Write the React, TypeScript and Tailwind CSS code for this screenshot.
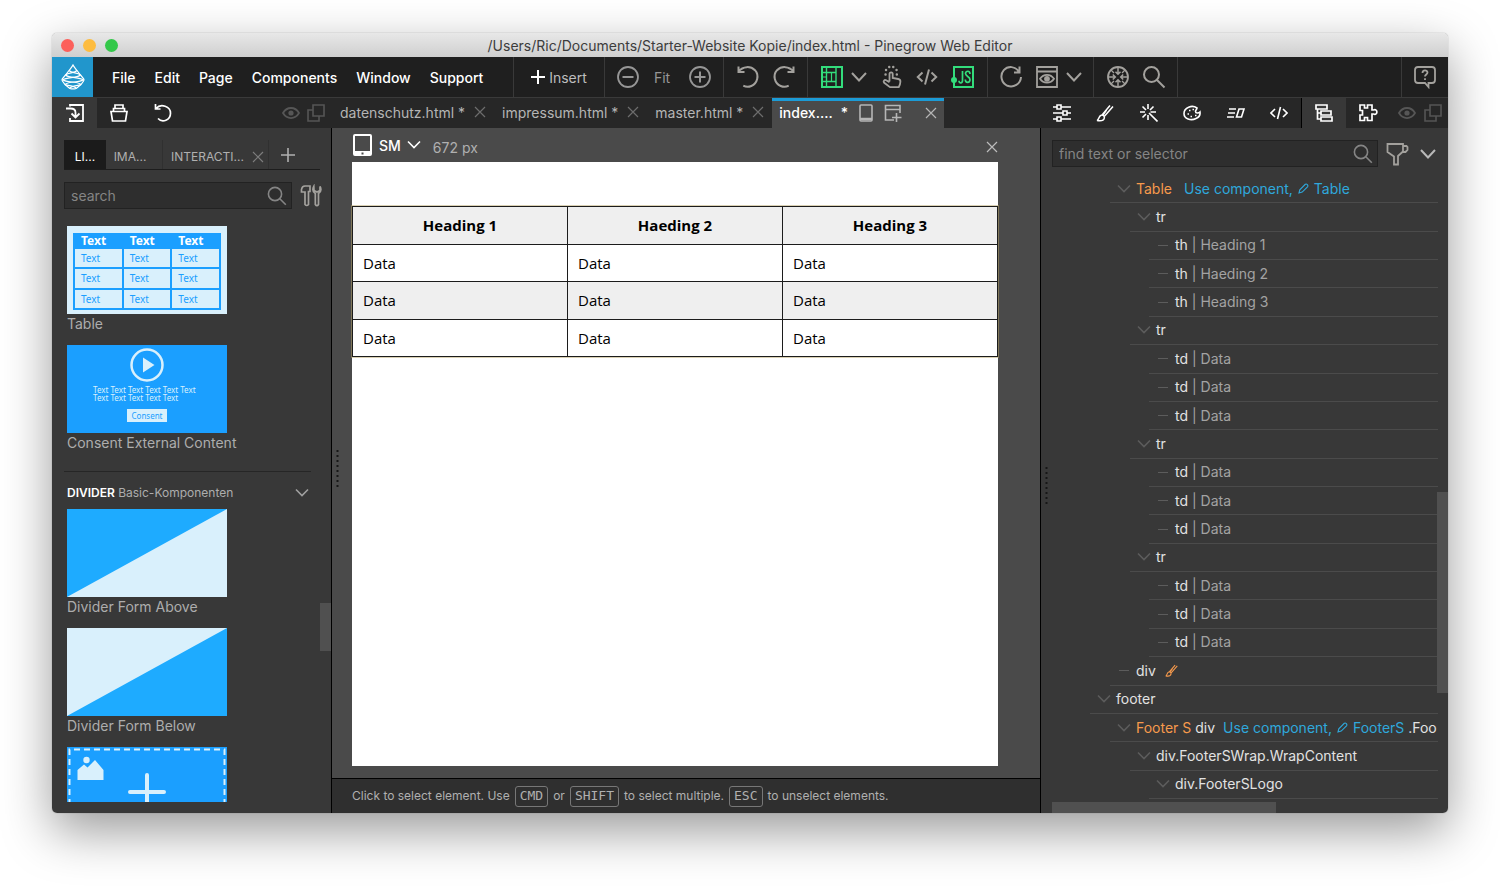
import React from "react";

type IconProps = { w?: number; h?: number; sw?: number; className?: string; children: React.ReactNode };

function Icon({ w = 24, h = 24, sw = 2, className = "", children }: IconProps) {
  return (
    <svg
      width={w}
      height={h}
      viewBox={`0 0 ${w} ${h}`}
      fill="none"
      stroke="currentColor"
      strokeWidth={sw}
      className={`shrink-0 ${className}`}
      aria-hidden="true"
    >
      {children}
    </svg>
  );
}

const Chevron = ({ className = "" }: { className?: string }) => (
  <Icon w={18} h={12} className={className}><path d="M2 2l7 7.5L16 2" /></Icon>
);
const SmallChevron = ({ className = "" }: { className?: string }) => (
  <Icon w={14} h={10} sw={1.6} className={className}><path d="M1 1.500l6 6 6-6" /></Icon>
);
const Close = ({ className = "" }: { className?: string }) => (
  <Icon w={12} h={12} sw={1.2} className={className}><path d="M1 1l10 10M11 1L1 11" /></Icon>
);
const Search = ({ className = "" }: { className?: string }) => (
  <Icon className={className}><circle cx="9.5" cy="9.5" r="7.5" /><path d="M15 15l7.5 7.5" /></Icon>
);
const SmallSearch = () => (
  <Icon w={20} h={20} sw={1.6} className="text-[#858585]"><circle cx="8" cy="8" r="6.600" /><path d="M12.800 12.800l6 6" /></Icon>
);
const Eye = () => (
  <Icon w={18} h={14} sw={1.8}><path d="M1 7c4-6.700 12-6.700 16 0-4 6.700-12 6.700-16 0z" /><circle cx="9" cy="7" r="2.600" fill="currentColor" stroke="none" /></Icon>
);
const Copy = () => (
  <Icon w={18} h={18} sw={1.6}><path d="M6 1h11v11H6z" /><path d="M6 6H1v11h11v-5" /></Icon>
);
const Undo = () => (
  <Icon><path d="M2.500 1.500v5.500h6M2.500 6.500C7 1 14.500 .8 19 5.200c4.500 5 2.500 13.300-3.700 15.800-2.500 1-5.500 1-8-.4" /></Icon>
);
const Redo = () => (
  <Icon><path d="M21.500 1.500v5.500h-6M21.500 6.500C17 1 9.500 .8 5 5.200c-4.500 5-2.500 13.300 3.700 15.800 2.500 1 5.500 1 8-.4" /></Icon>
);
const Code = () => (
  <Icon w={22} h={16}><path d="M6.500 3.500L1.800 8l4.700 4.500M15.500 3.500L20.200 8l-4.700 4.500M13 .5L9 15.500" /></Icon>
);
const Brush = ({ size = 18 }: { size?: number }) => (
  <svg width={size} height={size} viewBox="0 0 18 18" fill="none" stroke="currentColor" strokeWidth="1.500" className="shrink-0" aria-hidden="true">
    <path d="M1 16.500c2.200-.6 1.500-4.500 4.200-5.300 1.800-.5 3.500.9 3.100 2.900-.6 2.700-4 3-7.300 2.400zM6 11L14 1.500M8.200 12.500L17 2.500M10.500 6l-3.500 5" />
  </svg>
);
const Pencil = () => (
  <Icon w={11} h={11} sw={1.1}><path d="M1 10l.8-3.200L7.300 1.300q1.100-.7 2 .3t.4 2L4.200 9.100z" /></Icon>
);
const Tablet = () => (
  <Icon w={14} h={18} sw={1.6}><rect x="1" y="1" width="12" height="16" rx="1" /><path d="M1 15h12" strokeWidth="2.400" /></Icon>
);

function PineLogo() {
  return (
    <Icon w={24} h={26} sw={1.2} className="text-white">
      <path d="M12 1C11 3 9.500 4.500 8 6.500L4.500 11 1.500 14.500q-1 1.500.3 3L4 20.500l4.500 3.800q1 .6 2 .6h3q1 0 2-.6l4.500-3.800 2.200-3q1.300-1.500.3-3L19.500 11 16 6.500C14.500 4.500 13 3 12 1z" />
      <path d="M8 6.500c2.500 3 8.500 1.800 11.500 4.500M4.500 11c4 3.800 13.500 1.500 18 5M1.500 15.500c4.500 4 14 1 18.500 5M4 20.500c3.500 1.800 8.500.5 11.500 4" />
      <path d="M16 6.500c-2.500 3-8.500 1.800-11.500 4.500M19.500 11c-4 3.800-13.500 1.500-18 5M22.500 15.500c-4.500 4-14 1-18.500 5M20 20.500c-3.500 1.800-8.500.5-11.500 4" />
    </Icon>
  );
}

function IconButton({ label, className = "", children }: { label: string; className?: string; children: React.ReactNode }) {
  return (
    <button type="button" aria-label={label} className={`flex items-center justify-center ${className}`}>
      {children}
    </button>
  );
}

function TitleBar() {
  return (
    <header className="flex h-6 shrink-0 items-center rounded-t-[5px] bg-linear-to-b from-[#e8e8e8] to-[#cfcfcf] px-[9px] pt-px">
      <div className="flex flex-1 gap-[9px]">
        <span className="size-[13px] rounded-full bg-[#fc605b]" />
        <span className="size-[13px] rounded-full bg-[#fdbc40]" />
        <span className="size-[13px] rounded-full bg-[#34c84a]" />
      </div>
      <h1 className="text-[14px] text-[#3c3c3c]">/Users/Ric/Documents/Starter-Website Kopie/index.html - Pinegrow Web Editor</h1>
      <div className="flex-1" />
    </header>
  );
}

function MenuBar() {
  const group = "flex items-center justify-center border-l border-[#393939]";
  return (
    <div className="flex h-[41px] shrink-0 border-b border-[#3a3a3a] bg-[#1f1f1f] text-[#a3a19d]">
      <a href="#home" aria-label="Pinegrow" className="flex w-[41px] items-center justify-center bg-[#2196cc]">
        <PineLogo />
      </a>
      <nav className="flex w-[420px] items-center gap-[19px] pl-[19px] text-[14px] font-medium text-white">
        {["File", "Edit", "Page", "Components", "Window", "Support"].map((m) => (
          <button type="button" key={m}>{m}</button>
        ))}
      </nav>
      <button type="button" className={`${group} w-[91px] gap-1 text-[14px] text-[#bdbdbd]`}>
        <Icon w={14} h={14} className="text-white"><path d="M7 0v14M0 7h14" /></Icon>
        Insert
      </button>
      <div className={`${group} w-[119px] gap-[14px] text-[14px] text-[#969696]`}>
        <IconButton label="Zoom out"><Icon><circle cx="12" cy="12" r="10" strokeWidth="1.800" /><path d="M6.500 12h11" /></Icon></IconButton>
        <button type="button">Fit</button>
        <IconButton label="Zoom in" className="ml-1"><Icon><circle cx="12" cy="12" r="10" strokeWidth="1.800" /><path d="M6.500 12h11M12 6.500v11" /></Icon></IconButton>
      </div>
      <div className={`${group} w-[84px] gap-3`}>
        <IconButton label="Undo"><Undo /></IconButton>
        <IconButton label="Redo"><Redo /></IconButton>
      </div>
      <div className={`${group} w-[180px] gap-[13px]`}>
        <div className="flex items-center gap-[7px]">
          <IconButton label="Grid" className="text-[#33dd7c]">
            <Icon w={22} h={22}>
              <path d="M1 1h20v20H1z" />
              <path d="M5.500 1v20M15 1v20" strokeWidth="1.400" />
              <path d="M1 6.500h14M1 15.500h14" strokeWidth="1.600" />
              <path d="M10.500 6.500v9M1 11h4.500" strokeWidth="1.200" />
            </Icon>
          </IconButton>
          <IconButton label="Grid options"><Chevron /></IconButton>
        </div>
        <IconButton label="Interactions">
          <Icon w={22} h={24} sw={1.8}>
            <path d="M8.500 16.500V9c0-2.200 3.200-2.200 3.200 0v4l5.500 1c1.600.3 2.300 1.200 2.200 2.800-.1 2.200-.7 3.800-1.700 5.400H9L3.200 17.800c-1.500-1.700.4-3.500 2-2.500l3.300 2" />
            <path d="M4.500 9.500h.1M5 5h.1M8.200 2h.1M12.200 2h.1M15.500 5h.1M15.800 9.500h.1" strokeWidth="2.400" strokeLinecap="round" />
          </Icon>
        </IconButton>
        <IconButton label="Code"><Code /></IconButton>
        <IconButton label="JavaScript" className="text-[#33dd7c]">
          <Icon w={24} h={22}>
            <path d="M3 1h19v20H3z" />
            <circle cx="3" cy="14" r="3" fill="currentColor" stroke="none" />
            <path d="M11.500 5v9.500c0 3-3.500 3-3.500.3M19 8c0-3.600-4.500-3.600-4.500-.4 0 3 4.500 2.800 4.500 6 0 3.700-4.700 3.700-4.700 0" strokeWidth="1.700" />
          </Icon>
        </IconButton>
      </div>
      <div className={`${group} w-[106px] gap-[7px]`}>
        <IconButton label="Refresh" className="mr-[6px]">
          <Icon><path d="M20.500 1.500v6h-5.500M20 7C16.500 1 9 .6 4.800 5.200c-4.300 4.900-2.500 12.900 3.600 15.600 6 2.400 13.200-1.700 13.600-8.800" /></Icon>
        </IconButton>
        <IconButton label="Preview">
          <Icon w={22} h={22} sw={1.8}><path d="M1 1h20v20H1zM1 5.500h20M4 12.800c3.500-5.200 10.500-5.200 14 0-3.500 5.200-10.500 5.200-14 0z" /><circle cx="11" cy="12.800" r="2" fill="currentColor" /></Icon>
        </IconButton>
        <IconButton label="Preview options"><Chevron /></IconButton>
      </div>
      <div className={`${group} w-[84px] gap-3`}>
        <IconButton label="Center">
          <Icon sw={1.8}>
            <circle cx="12" cy="12" r="10" />
            <path d="M12 2v7M12 22v-7M2 12h7M22 12h-7M9.500 6.800L12 9.300l2.500-2.500M9.500 17.200l2.500-2.500 2.500 2.500M6.800 9.500L9.300 12l-2.500 2.500M17.200 9.500L14.700 12l2.500 2.500" strokeWidth="1.500" />
            <path d="M5 5l3 3M19 5l-3 3M5 19l3-3M19 19l-3-3" strokeWidth="1.300" />
          </Icon>
        </IconButton>
        <IconButton label="Search"><Search /></IconButton>
      </div>
      <div className={`${group} flex-1`} />
      <IconButton label="Help" className={`${group} w-[47px]`}>
        <Icon sw={1.8}>
          <path d="M5 2h14q3 0 3 3v10q0 3-3 3h-3.500v4L12 18H5q-3 0-3-3V5q0-3 3-3z" />
          <path d="M9.500 8c0-3.400 5-3.200 5-.4 0 1.900-2.500 2-2.500 4M12 13.200V15" />
        </Icon>
      </IconButton>
    </div>
  );
}

function FileTabs() {
  return (
    <div className="flex min-w-0 flex-1 items-center text-[14px] text-[#b5b5b5]">
      {["datenschutz.html *", "impressum.html *", "master.html *"].map((name) => (
        <div key={name} className="flex shrink-0 items-center gap-[9px] px-2 pb-[2px]">
          <button type="button">{name}</button>
          <IconButton label={`Close ${name}`} className="text-[#6d6d6d]"><Close /></IconButton>
        </div>
      ))}
      <div className="flex h-full w-[172px] shrink-0 items-center border-t-3 border-[#1c9bd6] bg-[#4a4a4a] px-[7px] pb-1">
        <button type="button" className="flex gap-2 font-medium text-white">index.... <span>*</span></button>
        <IconButton label="Device" className="ml-[11px]"><Tablet /></IconButton>
        <IconButton label="Add view" className="ml-[11px]">
          <Icon w={18} h={18} sw={1.6}><path d="M10 16H1.500V1.500H16V9M1.500 5.500H16M12.500 9v9M8 13.500h9.500" /></Icon>
        </IconButton>
        <IconButton label="Close index.html" className="ml-auto"><Close /></IconButton>
      </div>
    </div>
  );
}

function TabRow() {
  return (
    <div className="flex h-[30px] shrink-0 bg-[#272727] text-white">
      <div className="flex w-[280px] shrink-0">
        <IconButton label="Insert panel" className="w-[45px] bg-[#383838]">
          <Icon w={18} h={18} sw={1.8}><path d="M4 2.500V1h13v16H4v-3" /><path d="M0 4.500h4.500c3 0 5 1.500 5 4v5M5.500 9.500l4 4 4-4" /></Icon>
        </IconButton>
        <IconButton label="Project" className="w-11">
          <Icon w={18} h={18} sw={1.7}><path d="M1 7.500h16l-1.500 9.500h-13zM3.500 7.500V4.500h11v3M5 4.500V1h8v3.500" /></Icon>
        </IconButton>
        <IconButton label="History" className="w-11">
          <Icon w={18} h={18} sw={1.7}><path d="M1.500 0v5h5M2 4.500c5-5.500 14.500-2 14.500 4.700 0 6.800-8 10-12.500 5.300" /></Icon>
        </IconButton>
        <div className="ml-auto flex items-center gap-[7px] pr-[7px] text-[#565656]">
          <IconButton label="Toggle panel"><Eye /></IconButton>
          <IconButton label="Detach panel"><Copy /></IconButton>
        </div>
      </div>
      <FileTabs />
      <div className="flex w-[408px] shrink-0">
        <div className="grid w-[262px] grid-cols-6 border-r border-black">
          <IconButton label="Properties">
            <Icon w={18} h={18} sw={1.6}><path d="M0 3h4M8 3h10M0 9h10M14 9h4M0 15h4M8 15h10M4 1h4v4H4zM10 7h4v4h-4zM4 13h4v4H4z" /></Icon>
          </IconButton>
          <IconButton label="Style"><Brush /></IconButton>
          <IconButton label="Effects">
            <Icon w={18} h={18} sw={1.6}><path d="M8 0v5M8 11v5M0 8h5M10.500 8H16M2.500 2.500l3.500 3.500M13.500 2.500L10 6M2.500 13.500L6 10M9 9l8.500 8.500" /></Icon>
          </IconButton>
          <IconButton label="Colors">
            <Icon w={18} h={16} sw={1.6}>
              <path d="M14 3C9-.5 1 2.500 1 8.500 1 14 8 16 13 13.500c2.500-1 4.500-3 4-6.500-1.500 1.500-4.500 1.500-4.500-.6C12.500 5 14 4.500 14 3z" />
              <path d="M4.500 9h1.500M6 5.500h1.500M9.500 4.500H11M7.500 11.500H9M12 10.500h1.500" />
            </Icon>
          </IconButton>
          <IconButton label="Transform">
            <Icon w={18} h={12} sw={1.6}><path d="M2 2h7M1 6h7M0 10h7M12 2h5l-2.500 8h-5z" /></Icon>
          </IconButton>
          <IconButton label="Source">
            <Icon w={18} h={14} sw={1.6}><path d="M5 3L1 7l4 4M13 3l4 4-4 4M10.500 1l-3 12" /></Icon>
          </IconButton>
        </div>
        <IconButton label="Tree" className="w-[44px] bg-[#383838]">
          <Icon w={18} h={18} sw={1.7}><path d="M1 1h11v4H1zM6 7h10v4H6zM6 13h11v4H6zM2.500 5v10H6M2.500 9H6" /></Icon>
        </IconButton>
        <IconButton label="Plugins" className="w-11">
          <Icon w={19} h={18} sw={1.7}><path d="M1 1h4.500v3h3V1H13v5h1.500c4.500-2 4.500 6 0 4H13v6.500H8.500v-3h-3v3H1V11h2.500V6.500H1z" /></Icon>
        </IconButton>
        <div className="ml-auto flex items-center gap-2 pr-[6px] text-[#565656]">
          <IconButton label="Toggle tree"><Eye /></IconButton>
          <IconButton label="Detach tree"><Copy /></IconButton>
        </div>
      </div>
    </div>
  );
}

function TableThumb() {
  return (
    <div className="h-full bg-[#d9f0fc] px-[6px] pt-[7px] pb-[4px] font-['Noto_Sans',sans-serif]">
      <div className="grid h-full grid-cols-3 grid-rows-[14px_1fr_1fr_1fr] gap-x-[2px] gap-y-[2px] bg-[#1b9fff] px-[2px] pb-[2px]">
        {[0, 1, 2].map((i) => (
          <span key={i} className="pl-[6px] text-[12px] leading-[16px] font-bold text-white">Text</span>
        ))}
        {[0, 1, 2, 3, 4, 5, 6, 7, 8].map((i) => (
          <span key={i} className="flex items-center bg-[#d9f0fc] pl-[6px] text-[10px] leading-none text-[#1b9fff]">Text</span>
        ))}
      </div>
    </div>
  );
}

function ConsentThumb() {
  return (
    <div className="flex h-full flex-col items-center bg-[#1b9fff] pt-[3px] font-['Noto_Sans',sans-serif] text-[#d9f0fc]">
      <Icon w={34} h={34} sw={2.5}><circle cx="17" cy="17" r="15.500" /><path d="M13 9.500v15L24.500 17z" fill="currentColor" stroke="none" /></Icon>
      <p className="mt-1 w-[108px] text-[8px] leading-[8px]">Text Text Text Text Text Text Text Text Text Text Text</p>
      <span className="mt-[7px] flex h-[13px] w-10 items-center justify-center bg-[#d9f0fc] text-[8px] leading-none text-[#1b9fff]">Consent</span>
    </div>
  );
}

function DividerThumb({ flip }: { flip?: boolean }) {
  return (
    <svg viewBox="0 0 160 88" className="size-full" preserveAspectRatio="none" aria-hidden="true">
      <rect width="160" height="88" fill={flip ? "#d9f0fc" : "#1eabff"} />
      <path d="M160 0v88H0z" fill={flip ? "#1eabff" : "#d9f0fc"} />
    </svg>
  );
}

function ImageThumb() {
  return (
    <svg width="160" height="88" viewBox="0 0 160 88" fill="none" aria-hidden="true">
      <rect width="160" height="88" fill="#1b9fff" />
      <path d="M2.500 88V2.500h155V88" stroke="#d9f0fc" strokeWidth="2" strokeDasharray="6 4" />
      <circle cx="19.500" cy="13" r="3.200" fill="#d9f0fc" />
      <path d="M10.500 33V23l6.500-5.500 3.500 3L28 13l8.500 10v10z" fill="#d9f0fc" />
      <path d="M80 28v34M63 45h34" stroke="#d9f0fc" strokeWidth="4" strokeLinecap="round" />
    </svg>
  );
}

function Card({ title, children }: { title?: string; children: React.ReactNode }) {
  return (
    <figure className="shrink-0">
      <div className="h-[88px] w-40 overflow-hidden">{children}</div>
      {title && <figcaption className="h-[31px] text-[14px] leading-5 text-[#adadad]">{title}</figcaption>}
    </figure>
  );
}

function DragDots({ className }: { className: string }) {
  return (
    <Icon w={3} h={38} sw={2} className={className}><path d="M1.500 0v38" strokeDasharray="2 3" /></Icon>
  );
}

function LibraryPanel() {
  return (
    <aside className="relative flex w-[280px] shrink-0 flex-col border-r border-black bg-[#383838] pt-3 pb-[11px] pl-3">
      <div className="mr-[11px] flex h-[30px] shrink-0 border-b border-[#1d1d1d] text-[12px] text-[#b0b0b0]">
        <button type="button" className="w-[42px] bg-[#1b1b1b] pt-1 text-white">LI...</button>
        <button type="button" className="w-[57px] border-r border-[#303030] pt-1 pr-2">IMA...</button>
        <div className="flex w-[106px] items-center justify-between border-r border-[#303030] pt-1 pr-1 pl-2">
          <button type="button">INTERACTI...</button>
          <IconButton label="Close interactions"><Close className="text-[#7c7c7c]" /></IconButton>
        </div>
        <IconButton label="Add tab" className="w-[38px]"><Icon w={14} h={14} sw={1.6}><path d="M7 0v14M0 7h14" /></Icon></IconButton>
      </div>
      <div className="mt-3 flex shrink-0 items-center gap-2">
        <div className="flex h-[27px] w-[228px] items-center border border-[#222] bg-[#2e2e2e] pr-1">
          <input type="text" aria-label="Search library" placeholder="search" className="h-full min-w-0 flex-1 bg-transparent px-[6px] text-[14px] leading-5 text-white outline-none placeholder:text-[#858585]" />
          <SmallSearch />
        </div>
        <IconButton label="Tools" className="text-[#a3a19d]">
          <Icon w={23} h={24} sw={1.7}>
            <path d="M1.500 8V5.500Q2 2 5 2h5v5.500H8.500v13q-1.700 2-3.500 0V8z" />
            <path d="M13.800 2.500q-2.300 4.500 1.500 7v11q1.600 2.300 3.200 0v-11q3.800-2.500 1.500-7v4l-3 1.500-3-1.500z" />
          </Icon>
        </IconButton>
      </div>
      <div className="mt-[17px] flex min-h-0 flex-1 flex-col overflow-hidden pl-[3px]">
        <Card title="Table"><TableThumb /></Card>
        <Card title="Consent External Content"><ConsentThumb /></Card>
        <div className="mt-[7px] mr-5 -ml-[3px] flex h-[38px] shrink-0 items-center justify-between border-t border-[#262626] pt-1 pr-[2px] pl-[3px]">
          <h2 className="text-[12px] text-[#adadad]"><b className="font-semibold text-white">DIVIDER</b> Basic-Komponenten</h2>
          <IconButton label="Collapse divider" className="text-[#a0a0a0]"><SmallChevron /></IconButton>
        </div>
        <Card title="Divider Form Above"><DividerThumb /></Card>
        <Card title="Divider Form Below"><DividerThumb flip /></Card>
        <Card><ImageThumb /></Card>
      </div>
      <div className="absolute top-[475px] right-0 h-12 w-[11px] bg-[#505050]" />
    </aside>
  );
}

function Canvas() {
  const rows = ["bg-white", "bg-[#efefef]", "bg-white"];
  const cell = "border border-[#1c1c1c] p-0";
  return (
    <main className="relative flex min-w-0 flex-1 flex-col bg-[#4a4a4a]">
      <div className="flex min-h-0 flex-1 flex-col pr-[42px] pb-3 pl-5">
        <div className="flex h-[34px] shrink-0 items-center">
          <button type="button" className="flex items-center gap-[7px] text-[14px] font-medium text-white">
            <Icon w={20} h={24}><rect x="2" y="2" width="17" height="20" rx="1" /><path d="M2 20h17" strokeWidth="4" /><path d="M9.500 20.500h2" stroke="#4a4a4a" /></Icon>
            SM
            <SmallChevron className="-ml-px" />
          </button>
          <span className="pt-1 pl-3 text-[14px] text-[#b0b0b0]">672 px</span>
          <IconButton label="Close view" className="ml-auto pt-1 text-[#bcbcbc]"><Close /></IconButton>
        </div>
        <div className="flex-1 bg-white pt-[44px] font-['Open_Sans',sans-serif] text-[15px] text-black">
          <table className="h-[151px] w-full table-fixed border-collapse outline outline-[#b5a46a]/50">
            <tbody>
              <tr className="h-[37px] bg-[#efefef]">
                {["Heading 1", "Haeding 2", "Heading 3"].map((h) => (
                  <th key={h} scope="col" className={`${cell} font-bold`}>{h}</th>
                ))}
              </tr>
              {rows.map((bg, r) => (
                <tr key={r} className={`h-[37px] ${bg}`}>
                  {[0, 1, 2].map((c) => (
                    <td key={c} className={`${cell} pl-[10px]`}>Data</td>
                  ))}
                </tr>
              ))}
            </tbody>
          </table>
        </div>
      </div>
      <footer className="flex h-[35px] shrink-0 items-center gap-[5px] border-t border-black bg-[#2f2f2f] pl-5 text-[12px] text-[#b0b0b0]">
        <span>Click to select element. Use</span>
        <Key>CMD</Key>
        <span>or</span>
        <Key>SHIFT</Key>
        <span>to select multiple.</span>
        <Key>ESC</Key>
        <span>to unselect elements.</span>
      </footer>
      <DragDots className="absolute top-[322px] left-[4px] text-[#161616]" />
    </main>
  );
}

function Key({ children }: { children: React.ReactNode }) {
  return (
    <kbd className="flex h-[21px] items-center rounded-[3px] border border-[#777] px-1 font-['DejaVu_Sans_Mono',monospace] text-[13px]">{children}</kbd>
  );
}

type Node = { depth: number; leaf?: boolean; label: React.ReactNode };

const use = (name: string) => (
  <span className="ml-2 inline-flex items-center gap-[5px] text-[#2fa8dc]">
    <a href="#component">Use component,</a>
    <Pencil />
    <a href="#edit">{name}</a>
  </span>
);

const text = (tag: string, content: string): React.ReactNode => (
  <>
    {tag} <span className="text-[#a3a3a3]">| {content}</span>
  </>
);

const dataRow: Node[] = [
  { depth: 2, label: "tr" },
  { depth: 3, leaf: true, label: text("td", "Data") },
  { depth: 3, leaf: true, label: text("td", "Data") },
  { depth: 3, leaf: true, label: text("td", "Data") },
];

const nodes: Node[] = [
  { depth: 1, label: <><span className="mr-1 text-[#f79a4c]">Table</span>{use("Table")}</> },
  { depth: 2, label: "tr" },
  { depth: 3, leaf: true, label: text("th", "Heading 1") },
  { depth: 3, leaf: true, label: text("th", "Haeding 2") },
  { depth: 3, leaf: true, label: text("th", "Heading 3") },
  ...dataRow,
  ...dataRow,
  ...dataRow,
  { depth: 1, leaf: true, label: <span className="flex items-center gap-[9px]">div <span className="text-[#f79a4c]"><Brush size={13} /></span></span> },
  { depth: 0, label: "footer" },
  { depth: 1, label: <><span className="text-[#f79a4c]">Footer S</span> div{use("FooterS")} .Foo</> },
  { depth: 2, label: "div.FooterSWrap.WrapContent" },
  { depth: 3, label: "div.FooterSLogo" },
];

const indents = ["ml-[38px]", "ml-[58px]", "ml-[78px]", "ml-[97px]"];

function TreePanel() {
  return (
    <aside className="relative flex w-[408px] shrink-0 flex-col border-l border-black bg-[#383838] pt-3 pl-[11px]">
      <div className="flex shrink-0 items-center">
        <div className="flex h-[27px] w-[326px] items-center border border-[#222] bg-[#2e2e2e] pr-1">
          <input type="text" aria-label="Find in tree" placeholder="find text or selector" className="h-full min-w-0 flex-1 bg-transparent px-[6px] text-[14px] leading-5 text-white outline-none placeholder:text-[#858585]" />
          <SmallSearch />
        </div>
        <IconButton label="Filter" className="ml-2 text-[#a3a19d]">
          <Icon w={23} h={24} sw={1.8}><path d="M1.500 2H17v7.500l-5 4.500v8.500H8v-8L1.500 10zM17 4h3.500l1 1v3l-2 2H17" /></Icon>
        </IconButton>
        <IconButton label="Filter options" className="ml-[10px] text-[#b8b8b8]"><Chevron /></IconButton>
      </div>
      <ul className="mt-2 mr-[10px] grid min-h-0 flex-1 auto-rows-fr overflow-hidden text-[14px] text-[#e2e2e2]">
        {nodes.map((n, i) => (
          <li key={i} className={`${indents[n.depth]} flex min-h-0 items-center gap-[5px] border-b border-[#4b4b4b] pl-[7px] leading-5 whitespace-nowrap`}>
            <span className="flex w-[14px] shrink-0 justify-center text-[#5c5c5c]">
              {n.leaf ? <span className="h-px w-[10px] bg-[#5c5c5c]" /> : <SmallChevron />}
            </span>
            <span>{n.label}</span>
          </li>
        ))}
      </ul>
      <div className="mt-[3px] h-[11px] w-[224px] shrink-0 bg-[#505050]" />
      <div className="absolute top-[364px] right-0 h-[201px] w-[11px] bg-[#505050]" />
      <DragDots className="absolute top-[339px] left-[4px] text-[#161616]" />
    </aside>
  );
}

export default function App() {
  return (
    <div className="flex h-screen flex-col bg-white px-[52px] pt-[33px] pb-[73px] font-[Inter,sans-serif]">
      <div className="flex min-h-0 flex-1 flex-col overflow-hidden rounded-[5px] shadow-[0_18px_50px_rgba(0,0,0,0.4),0_0_1px_rgba(0,0,0,0.5)]">
        <TitleBar />
        <MenuBar />
        <div className="flex min-h-0 flex-1 flex-col">
          <TabRow />
          <div className="flex min-h-0 flex-1">
            <LibraryPanel />
            <Canvas />
            <TreePanel />
          </div>
        </div>
      </div>
    </div>
  );
}
